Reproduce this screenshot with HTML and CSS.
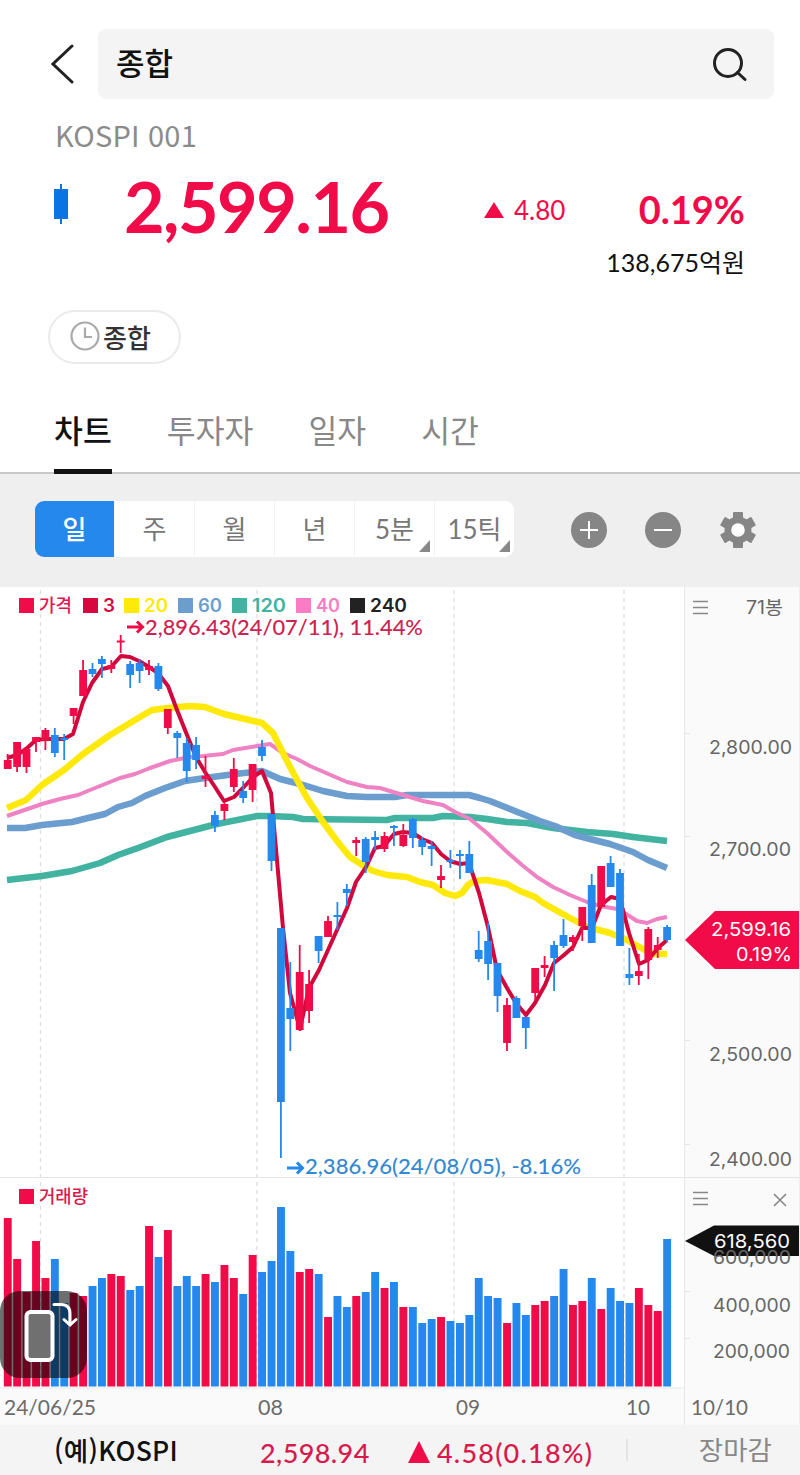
FILE: index.html
```html
<!DOCTYPE html>
<html lang="ko">
<head>
    <meta charset="UTF-8">
    <meta name="viewport" content="width=device-width, initial-scale=1.0">
    <title>KOSPI 종합</title>
    <link rel="stylesheet" href="styles.css">
</head>
<body>

    <header class="top-bar">
        <svg class="back" width="24" height="42" viewBox="0 0 24 42"><path d="M21 3 L2 21 L21 39"/></svg>
        <div class="search-box">
            <span>종합</span>
            <svg width="36" height="36" viewBox="0 0 36 36"><circle cx="16" cy="17" r="13.500"/><path d="M25.500 26.500 L33 33.500"/></svg>
        </div>
    </header>

    <section class="quote">
        <div class="code">KOSPI 001</div>
        <div class="price-row">
            <svg class="mini-candle" width="14" height="40" viewBox="0 0 14 40"><path d="M6 0h2v5h6v30H8v5H6v-5H0V5h6z"/></svg>
            <span class="price">2,599.16</span>
            <span class="change"><i class="up"></i>4.80</span>
            <span class="rate">0.19%</span>
        </div>
        <div class="amount">138,675억원</div>
        <div class="chip">
            <svg width="30" height="30" viewBox="0 0 30 30"><circle cx="15" cy="15" r="13.500"/><path d="M15 6.500V16h7"/></svg>
            <span>종합</span>
        </div>
    </section>

    <nav class="tabs">
        <span class="tab active">차트</span>
        <span class="tab">투자자</span>
        <span class="tab">일자</span>
        <span class="tab">시간</span>
    </nav>

    <div class="toolbar">
        <div class="periods">
            <span class="period selected">일</span>
            <span class="period">주</span>
            <span class="period">월</span>
            <span class="period">년</span>
            <span class="period more">5분</span>
            <span class="period more">15틱</span>
        </div>
        <div class="tools">
            <svg width="36" height="36" viewBox="0 0 36 36"><circle cx="18" cy="18" r="18"/><path d="M9 18h18M18 9v18"/></svg>
            <svg width="36" height="36" viewBox="0 0 36 36"><circle cx="18" cy="18" r="18"/><path d="M9 18h18"/></svg>
            <svg class="gear" width="38" height="38" viewBox="-19 -19 38 38">
                <rect x="-5" y="-18" width="10" height="36" rx="1"/>
                <rect x="-5" y="-18" width="10" height="36" rx="1" transform="rotate(60)"/>
                <rect x="-5" y="-18" width="10" height="36" rx="1" transform="rotate(120)"/>
                <circle r="13.500"/>
                <circle class="hole" r="6.800"/>
            </svg>
        </div>
    </div>

    <div class="chart">
        <svg id="chart" width="800" height="838" viewBox="0 587 800 838"></svg>
        <div class="rotate">
            <svg width="87" height="87" viewBox="0 0 87 87"><rect x="26.500" y="21" width="26" height="48" rx="4"/><path d="M54 13.500h7q9 0 9 9v10M64 28.500l6 5.500 6-5.500"/></svg>
        </div>
    </div>

    <footer class="ticker">
        <span class="ticker-name">(예)KOSPI</span>
        <span class="ticker-price">2,598.94</span>
        <span class="ticker-change"><i class="up"></i>4.58(0.18%)</span>
        <span class="ticker-state">장마감</span>
    </footer>

    <script src="chart.js"></script>
</body>
</html>
```
FILE: styles.css
```css
body {
    margin: 0;
    width: 800px;
    background-color: #fff;
    color: #111;
    font-family: Lato, "Noto Sans CJK KR", sans-serif;
}

svg {
    display: block;
    flex: none;
}

.top-bar {
    display: flex;
    align-items: center;
    padding: 29px 26px 0 51px;
    gap: 23px;
}

.back path,
.search-box svg {
    fill: none;
    stroke: #222;
    stroke-width: 3;
    stroke-linecap: round;
}

.search-box {
    flex: 1;
    display: flex;
    align-items: center;
    justify-content: space-between;
    height: 70px;
    box-sizing: border-box;
    padding: 0 26px 0 18px;
    background-color: #f4f4f4;
    border-radius: 8px;
    font-size: 31px;
    font-weight: 500;
}

.search-box span {
    line-height: 70px;
    height: 72px;
}

.quote {
    height: 303px;
    padding: 0 55px;
}

.code {
    padding-top: 15px;
    height: 43px;
    line-height: 41px;
    font-family: "Noto Sans CJK KR", sans-serif;
    font-size: 29px;
    letter-spacing: 0.2px;
    color: #8b8b8b;
}

.price-row {
    display: flex;
    align-items: center;
    height: 88px;
    color: #f10b48;
    padding-top: 5px;
}

.mini-candle {
    fill: #0b74e5;
    margin: 0 56px 4px -1px;
}

.price {
    width: 360px;
    font-size: 70px;
    font-weight: bold;
    letter-spacing: -1.5px;
}

.up {
    display: inline-block;
    border: 10px solid transparent;
    border-top: 0;
    border-bottom: 16px solid #f10b48;
}

.change {
    flex: 1;
    padding-top: 7px;
    font-size: 26px;
}

.change .up {
    margin-right: 10px;
    margin-bottom: 2px;
}

.rate {
    padding-top: 6px;
    font-size: 38px;
    font-weight: bold;
}

.amount {
    height: 40px;
    line-height: 40px;
    margin-top: -8px;
    text-align: right;
    font-size: 25px;
}

.chip {
    display: flex;
    align-items: center;
    gap: 3px;
    box-sizing: border-box;
    width: 133px;
    height: 54px;
    margin: 28px 0 0 -7px;
    padding: 0 0 2px 20px;
    border: 2px solid #eaeaea;
    border-radius: 27px;
    font-size: 26px;
    font-weight: 500;
    color: #333;
}

.chip svg {
    fill: none;
    stroke: #aaa;
    stroke-width: 2.2;
}

.tabs {
    display: flex;
    gap: 55px;
    height: 70px;
    padding-left: 54px;
    border-bottom: 2px solid #c8c8c8;
    font-size: 31.4px;
    color: #888;
}

.tab {
    height: 67px;
    line-height: 59px;
}

.tab.active {
    color: #111;
    font-weight: 500;
    border-bottom: 5px solid #111;
}

.toolbar {
    display: flex;
    align-items: center;
    box-sizing: border-box;
    height: 113px;
    padding: 0 0 3px 35px;
    background-color: #efefef;
}

.periods {
    display: flex;
    width: 479px;
    height: 56px;
    border-radius: 9px;
    overflow: hidden;
    background-color: #fff;
}

.period {
    position: relative;
    flex: 1;
    box-sizing: border-box;
    border-left: 1px solid #f2f2f2;
    text-align: center;
    line-height: 56px;
    font-size: 26px;
    color: #777;
}

.period.selected {
    border-left: 0;
    background-color: #2488ec;
    color: #fff;
    font-weight: 500;
}

.period.more::after {
    content: "";
    position: absolute;
    right: 4px;
    bottom: 5px;
    border-left: 11px solid transparent;
    border-bottom: 12px solid #888;
}

.tools {
    display: flex;
    align-items: center;
    gap: 38px;
    padding-top: 2px;
    margin-left: 57px;
}

.tools circle,
.gear rect {
    fill: #868686;
}

.tools path {
    stroke: #fff;
    stroke-width: 2;
}

.gear .hole {
    fill: #fff;
}

.chart {
    position: relative;
    height: 838px;
}

.rotate {
    position: absolute;
    left: 0;
    top: 704px;
    width: 87px;
    height: 87px;
    border-radius: 20px;
    background-color: rgba(0, 0, 0, 0.57);
}

.rotate rect {
    fill: #707070;
    stroke: #fff;
    stroke-width: 4;
}

.rotate path {
    fill: none;
    stroke: #fff;
    stroke-width: 3;
    stroke-linecap: round;
}

.axis-text {
    font-family: Inter, sans-serif;
    font-size: 19px;
    fill: #666;
}

.tag-text {
    font-family: Inter, sans-serif;
    font-size: 19px;
    fill: #fff;
}

.date-text {
    font-size: 22px;
    fill: #6b6b6b;
}

.legend-text {
    font-family: Inter, sans-serif;
    font-size: 18px;
    font-weight: 600;
}

.legend-name {
    font-family: "Noto Sans CJK KR", sans-serif;
    font-size: 18px;
    font-weight: 500;
}

.count-text {
    font-family: Inter, "Noto Sans CJK KR", sans-serif;
    font-size: 18px;
}

.mark-text {
    font-size: 22px;
    font-weight: 500;
}

.ticker {
    display: flex;
    align-items: center;
    box-sizing: border-box;
    height: 50px;
    padding: 0 28px 0 54px;
    background-color: #f4f4f4;
    font-size: 27px;
    font-weight: 500;
}

.ticker-name {
    width: 206px;
    padding-bottom: 2px;
    font-family: "Noto Sans CJK KR", sans-serif;
    font-size: 26.5px;
    letter-spacing: 0.3px;
}

.ticker-price {
    width: 148px;
    padding-top: 4px;
    letter-spacing: 0.4px;
    color: #d91a4d;
}

.ticker-change {
    width: 218px;
    padding-top: 4px;
    letter-spacing: 1.2px;
    white-space: nowrap;
    color: #d91a4d;
}

.ticker-change .up {
    border-width: 0 11px 22px;
    margin-right: 7px;
}

.ticker-state {
    flex: 1;
    border-left: 2px solid #e4e4e4;
    line-height: 22px;
    text-align: right;
    font-size: 26.5px;
    font-weight: normal;
    color: #888;
}
```
FILE: chart.js
```js
const RED = '#f10b48';
const BLUE = '#2488ec';
const BASE = 1386.5;

// one row per day: up/down, high, body top, body bottom, low, volume top
const days = [
    ['R', 754, 760, 769, 769, 1218], ['R', 742, 742, 767, 772, 1259], ['R', 748, 749, 767, 773, 1292],
    ['R', 737, 737, 742, 752, 1241], ['R', 728, 730, 740, 750, 1278], ['B', 728, 735, 753, 757, 1259],
    ['B', 734, 738, 740, 760, 1303], ['R', 708, 708, 716, 724, 1293], ['R', 660, 670, 696, 696, 1296],
    ['B', 663, 669, 674, 677, 1286], ['B', 656, 659, 664, 678, 1278], ['R', 660, 665, 669, 673, 1274],
    ['R', 635, 640.5, 642.5, 653, 1276], ['B', 661, 664, 675, 688, 1290], ['B', 659, 663, 671, 683, 1286],
    ['R', 660, 666, 670, 675, 1226], ['B', 663, 666, 689, 691, 1257], ['R', 709, 709, 728, 734, 1230],
    ['B', 731, 733, 738, 758, 1286], ['B', 738, 743, 771, 782, 1276], ['B', 737, 745, 760, 769, 1286],
    ['R', 756, 776, 779, 787, 1274], ['B', 811, 815, 826, 832, 1282], ['R', 802, 804, 811, 820, 1265],
    ['R', 758, 769, 787, 792, 1278], ['B', 781, 791, 798, 803, 1294], ['R', 764, 764, 790, 802, 1255],
    ['B', 740, 747, 756, 761, 1272], ['B', 814, 814, 861, 871, 1261], ['B', 928, 928, 1102, 1158, 1207],
    ['B', 962, 1008, 1019, 1051, 1251], ['R', 945, 972, 1030, 1030, 1272], ['R', 970, 984, 1011, 1023, 1269],
    ['B', 936, 936, 951, 963, 1274], ['R', 916, 921, 937, 937, 1317], ['B', 902, 915, 917, 930, 1296],
    ['B', 884, 889, 893, 906, 1307], ['R', 837, 840, 843, 856, 1296], ['B', 837, 839, 862, 873, 1292],
    ['B', 831, 837, 840, 850, 1272], ['R', 832, 836, 849, 852, 1288], ['B', 825, 826, 828, 846, 1282],
    ['R', 824, 835, 846, 847, 1307], ['B', 818, 819, 838, 848, 1307], ['B', 837, 840, 847, 855, 1323],
    ['B', 841, 846, 849, 866, 1319], ['R', 865, 876, 880, 888, 1317], ['B', 850, 860, 862, 868, 1321],
    ['B', 850, 854, 856, 879, 1323], ['B', 841, 854, 873, 873, 1315], ['B', 931, 950, 959, 962, 1278],
    ['B', 923, 941, 964, 980, 1296], ['B', 963, 963, 996, 1012, 1298], ['R', 998, 1005, 1043, 1051, 1323],
    ['B', 996, 998, 1018, 1018, 1303], ['B', 1017, 1017, 1028, 1049, 1315], ['R', 968, 968, 993, 1000, 1305],
    ['R', 956, 965, 968, 977, 1301], ['B', 941, 945, 958, 991, 1296], ['B', 919, 935, 946, 948, 1269],
    ['R', 935, 937, 942, 951, 1305], ['R', 907, 907, 926, 941, 1301], ['B', 874, 885, 943, 943, 1278],
    ['R', 866, 866, 907, 907, 1309], ['B', 856, 863, 887, 887, 1288], ['B', 869, 873, 946, 946, 1301],
    ['B', 948, 974, 978, 985, 1303], ['R', 954, 971, 976, 985, 1288], ['R', 927, 929, 960, 979, 1305],
    ['R', 937, 945, 950, 958, 1311], ['B', 925, 927, 940, 942, 1239]
];

// moving averages
const ma3 = '7,758 17,755 26,749 36,740 45,739 64,739 73,734 83,702 92,683 102,669 111,667 121,656 130,657 139,661 149,667 158,673 168,686 177,710 187,735 196,757 205,772 215,787 224,801 234,797 243,788 253,777 262,771 271,793 283,928 290,993 300,1029 309,988 319,970 328,950 337,930 347,908 356,882 366,867 375,848 384,846 394,834 403,832 413,833 422,839 432,843 441,854 450,861 460,864 469,863 479,893 488,927 497,970 507,988 516,1003 526,1015 535,1003 545,985 554,963 564,955 573,947 582,928 592,928 601,905 611,897 620,899 629,933 639,964 648,960 658,948 667,940';
const ma20 = '7,808 26,800 42,785 64,770 83,754 110,735 140,717 152,710 168,708 190,706 205,707 224,714 245,719 262,723 273,733 290,767 307,798 323,822 337,841 350,857 364,866 373,871 387,875 407,877 420,882 433,885 445,893 455,896 462,893 468,885 474,881 487,880 507,884 520,891 535,897 543,903 570,918 587,927 610,933 627,940 643,949 653,954 667,954';
const ma40 = '7,816 42,804 60,799 78,795 95,788 120,778 135,774 150,768 170,761 190,757 203,756 223,754 233,750 257,746 270,744 283,753 297,759 310,766 333,776 347,782 367,787 380,788 403,795 423,801 443,805 455,812 470,819 487,833 507,852 522,865 537,877 553,887 570,895 587,902 600,906 617,909 623,912 637,921 647,923 657,919 667,917';
const ma60 = '7,828 25,828 42,825 72,822 88,818 105,814 118,807 132,803 145,796 165,788 185,781 205,778 235,774 262,771 280,779 300,784 323,791 347,796 367,797 395,797 407,795 469,795 480,798 490,801 505,807 540,821 555,826 575,835 590,839 610,844 633,852 648,860 667,868';
const ma120 = '7,880 42,876 72,871 100,863 118,855 138,848 167,837 190,831 217,824 257,816 270,816 293,817 303,819 387,820 395,818 433,818 443,816 470,817 487,819 507,822 527,823 553,828 570,830 587,832 613,834 633,837 667,841';

let out = '';

function rect(x, y, w, h, color) {
    out += `<rect x="${x}" y="${y}" width="${w}" height="${h}" fill="${color}"/>`;
}

function line(points, color, width) {
    out += `<polyline points="${points}" fill="none" stroke="${color}" stroke-width="${width}" stroke-linejoin="round"/>`;
}

function text(x, y, width, cls, value, color) {
    const fill = color ? ` style="fill:${color}"` : '';
    out += `<text x="${x}" y="${y}" textLength="${width}" lengthAdjust="spacingAndGlyphs" class="${cls}"${fill}>${value}</text>`;
}

// backgrounds and grid
rect(684, 587, 116, 838, '#fafafa');
rect(0, 1388, 800, 37, '#fafafa');
[40.5, 257, 454, 624].forEach(x => {
    out += `<path d="M${x} 590V1388" stroke="#dedede" stroke-width="1.3" stroke-dasharray="4 4"/>`;
});
rect(0, 1177, 800, 1, '#e2e4e5');
rect(0, 1387.5, 684, 1, '#e2e8ea');
rect(684, 587, 1, 838, '#e6e8e9');
rect(799, 587, 1, 838, '#eeeeee');
[733, 836, 1040, 1144, 1291, 1338].forEach(y => rect(685, y, 5, 1, '#e4e4e4'));

line(ma120, '#41b3a0', 6.5);
line(ma60, '#6c9dcf', 6.5);
line(ma40, '#ee82c2', 4);
line(ma20, '#ffe90a', 6.5);
line(ma3, '#d0083c', 4);

days.forEach((d, i) => {
    const x = 7.7 + i * 9.42;
    const color = d[0] === 'R' ? RED : BLUE;
    rect((x - 0.9).toFixed(1), d[1], 1.8, d[4] - d[1], color);
    rect((x - 3.9).toFixed(1), d[2], 7.8, d[3] - d[2], color);
    rect((x - 3.9).toFixed(1), d[5], 7.9, BASE - d[5], color);
});

// legend
rect(19, 598, 15, 15, RED);
text(39, 612, 33, 'legend-name', '가격', '#e2174d');
[
    [83, '#d6083e', '3', 12], [124, '#ffe90a', '20', 24], [178, '#6c9dcf', '60', 24],
    [232, '#41b3a0', '120', 34], [296, '#f97cc4', '40', 24], [350, '#222', '240', 37]
].forEach(l => {
    rect(l[0], 598, 15, 15, l[1]);
    text(l[0] + 20, 612, l[3], 'legend-text', l[2], l[1]);
});
rect(19, 1189, 15, 15, RED);
text(39, 1203, 49, 'legend-name', '거래량', '#d91a4d');

// high and low marks
out += `<path d="M127 627h15M137 621.500l5.500 5.500-5.500 5.500" fill="none" stroke="${RED}" stroke-width="3"/>`;
text(145, 635, 278, 'mark-text', '2,896.43(24/07/11), 11.44%', '#cc2350');
out += `<path d="M287 1168h15M297 1162.500l5.500 5.500-5.500 5.500" fill="none" stroke="${BLUE}" stroke-width="3"/>`;
text(305, 1174, 276, 'mark-text', '2,386.96(24/08/05), -8.16%', '#3488d0');

// axis
text(709, 754, 83, 'axis-text', '2,800.00');
text(709, 856, 82, 'axis-text', '2,700.00');
text(709, 1061, 83, 'axis-text', '2,500.00');
text(709, 1166, 83, 'axis-text', '2,400.00');
out += '<path d="M693 601.500h15M693 607.500h15M693 613.500h15M693 1192.500h15M693 1198.500h15M693 1204.500h15M774 1194l12 12M786 1194l-12 12" stroke="#888" stroke-width="1.6"/>';
text(746, 614, 37, 'count-text', '71봉', '#666');

out += `<path d="M685 940l30-29h84v58h-84z" fill="${RED}"/>`;
text(711, 936, 80, 'tag-text', '2,599.16');
text(736, 961, 56, 'tag-text', '0.19%');
out += '<path d="M685 1241l29-15.500h85v30.500h-57l-28 0z" fill="#111"/>';
text(714, 1248, 76, 'tag-text', '618,560');
text(713, 1264, 78, 'axis-text', '600,000');
text(713, 1312, 78, 'axis-text', '400,000');
text(713, 1358, 77, 'axis-text', '200,000');

text(4, 1415, 92, 'date-text', '24/06/25');
text(258, 1415, 25, 'date-text', '08');
text(456, 1415, 24, 'date-text', '09');
text(626, 1415, 24, 'date-text', '10');
text(691, 1415, 57, 'date-text', '10/10');

document.getElementById('chart').innerHTML = out;
```
